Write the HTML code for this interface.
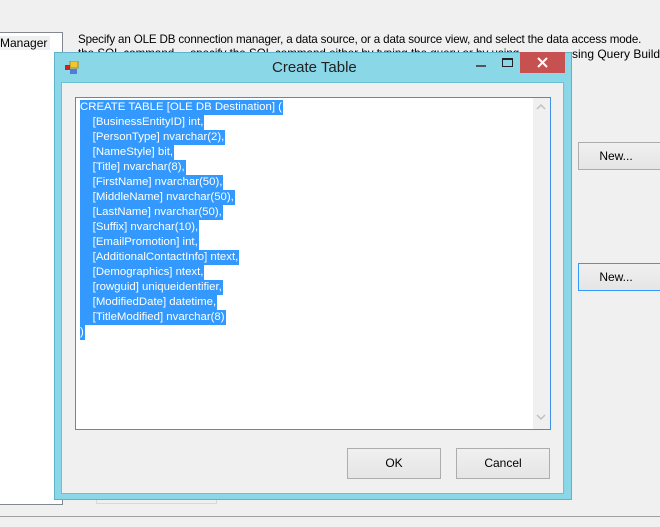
<!DOCTYPE html>
<html><head><style>
*{margin:0;padding:0;box-sizing:border-box}
body{width:660px;height:527px;background:#f0f0f0;position:relative;overflow:hidden;font-family:"Liberation Sans",sans-serif;font-size:12px;color:#000}
.abs{position:absolute}
.btn{position:absolute;background:linear-gradient(#f0f0f0,#e5e5e5);border:1px solid #adadad;text-align:center;font-size:12px}
.sel{position:absolute;left:80px;top:100px;font-size:11.4px;line-height:15px;white-space:pre;color:#fff}
.sel span{background:#3399ff;display:inline-block;padding-right:1px}
</style></head><body>
<div class="abs" style="left:-2px;top:32px;width:65px;height:473px;background:#fff;border:1px solid #828790;"></div>
<div class="abs" style="left:0;top:36px;font-size:12px;background:#f0f0f0;padding-right:3px">Manager</div>
<div class="abs" style="left:78px;top:33px;white-space:nowrap;font-size:11.6px;letter-spacing:-0.15px">Specify an OLE DB connection manager, a data source, or a data source view, and select the data access mode.</div>
<div class="abs" style="left:78px;top:47px;white-space:nowrap;font-size:11.6px;width:500px;overflow:hidden">the SQL command ... specify the SQL command either by typing the query or by using</div>
<div class="abs" style="left:572px;top:47px;white-space:nowrap;font-size:12px">sing Query Builder</div>
<div class="btn" style="left:578px;top:142px;width:90px;height:28px;line-height:26px;padding-right:14px">New...</div>
<div class="btn" style="left:578px;top:263px;width:90px;height:28px;line-height:26px;padding-right:14px;border-color:#3399ff">New...</div>
<div class="abs" style="left:96px;top:495px;width:121px;height:9px;border:1px solid #d8d8d8"></div>
<div class="abs" style="left:0;top:516px;width:660px;height:1px;background:#a0a0a0"></div>
<!-- dialog -->
<div class="abs" style="left:54px;top:52px;width:518px;height:448px;background:#8ad7e8;border:1px solid #5fb3c8"></div>
<div class="abs" style="left:61px;top:82px;width:503px;height:412px;background:#f0f0f0;border:1px solid #6cc0d4"></div>
<svg class="abs" style="left:65px;top:61px" width="14" height="14"><rect x="5" y="0" width="8" height="7" fill="#f5c431" stroke="#b8860b" stroke-width="1"/><rect x="0" y="4" width="5" height="5" fill="#d02020"/><rect x="5" y="8" width="7" height="5" fill="#4d7fd8"/></svg>
<div class="abs" style="left:272px;top:59px;font-size:15px;color:#222">Create Table</div>
<div class="abs" style="left:476px;top:65px;width:10px;height:2px;background:#555"></div>
<div class="abs" style="left:502px;top:58px;width:11px;height:9px;border:1px solid #222;border-top-width:2px"></div>
<div class="abs" style="left:520px;top:52px;width:45px;height:21px;background:#c75050"></div>
<svg class="abs" style="left:536px;top:56px" width="13" height="13"><path d="M2 2L11 11M11 2L2 11" stroke="#fff" stroke-width="2"/></svg>
<div class="abs" style="left:75px;top:97px;width:476px;height:333px;background:#fff;border:1px solid #3f8ee8"></div>
<div class="abs" style="left:533px;top:98px;width:17px;height:331px;background:#f0f0f0"></div>
<svg class="abs" style="left:536px;top:103px" width="10" height="8"><path d="M1 6L5 2L9 6" stroke="#c0c0c0" stroke-width="1.5" fill="none"/></svg>
<svg class="abs" style="left:536px;top:413px" width="10" height="8"><path d="M1 2L5 6L9 2" stroke="#c0c0c0" stroke-width="1.5" fill="none"/></svg>
<div class="sel"><span>CREATE TABLE [OLE DB Destination] (</span>
<span>    [BusinessEntityID] int,</span>
<span>    [PersonType] nvarchar(2),</span>
<span>    [NameStyle] bit,</span>
<span>    [Title] nvarchar(8),</span>
<span>    [FirstName] nvarchar(50),</span>
<span>    [MiddleName] nvarchar(50),</span>
<span>    [LastName] nvarchar(50),</span>
<span>    [Suffix] nvarchar(10),</span>
<span>    [EmailPromotion] int,</span>
<span>    [AdditionalContactInfo] ntext,</span>
<span>    [Demographics] ntext,</span>
<span>    [rowguid] uniqueidentifier,</span>
<span>    [ModifiedDate] datetime,</span>
<span>    [TitleModified] nvarchar(8)</span>
<span>)</span></div>
<div class="btn" style="left:347px;top:448px;width:94px;height:31px;line-height:29px">OK</div>
<div class="btn" style="left:456px;top:448px;width:94px;height:31px;line-height:29px">Cancel</div>
</body></html>
